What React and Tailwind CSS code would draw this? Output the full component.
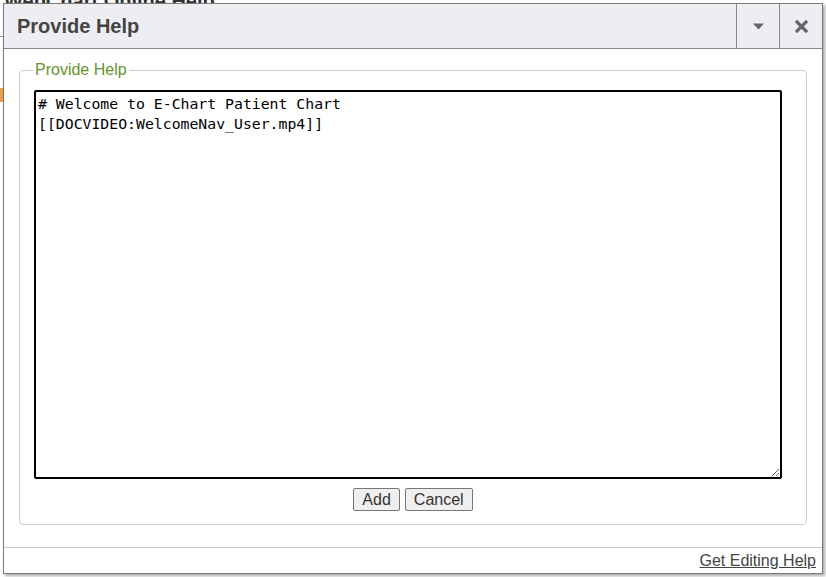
import React from "react";

const App = () => {
  return (
    <div className="relative w-[826px] h-[577px] overflow-hidden bg-white font-['Liberation_Sans',Arial,sans-serif]">
      {/* Page behind the dialog */}
      <div className="absolute left-[4px] top-[-14px] text-[20px] font-bold text-[#333]">
        WebChart Online Help
      </div>
      <div className="absolute left-0 top-[36px] w-[6px] h-px bg-[#999]" />
      <div className="absolute left-0 top-[88px] w-[3px] h-[14px] bg-[#e8a050]" />

      {/* Dialog */}
      <div className="absolute left-[3px] top-[3px] w-[820px] h-[571px] flex flex-col bg-white border border-[#7a7a7a] shadow-[2px_2px_3px_rgba(0,0,0,0.35)]">
        {/* Header */}
        <div className="flex h-[45px] shrink-0 items-stretch bg-[#eeeef2] border-b border-[#888]">
          <div className="flex-1 flex items-center pl-[13px] text-[20px] font-bold text-[#444]">
            Provide Help
          </div>
          <button className="w-[43px] flex items-center justify-center border-l border-[#888]">
            <svg width="11" height="7" viewBox="0 0 11 7">
              <path d="M0 0.5 H11 L5.5 6.5 Z" fill="#666" />
            </svg>
          </button>
          <button className="w-[43px] flex items-center justify-center border-l border-[#888]">
            <svg width="13" height="13" viewBox="0 0 13 13">
              <path d="M2 2 L11 11 M11 2 L2 11" stroke="#666" strokeWidth="3.2" strokeLinecap="square" />
            </svg>
          </button>
        </div>

        {/* Body */}
        <div className="flex-1 px-[15px] pt-[11px]">
          <fieldset className="border border-[#ccc] rounded-[4px] px-[13px] pb-[13px] pt-0 m-0">
            <legend className="px-[2px] text-[16px] text-[#62952a] leading-[20px]">Provide Help</legend>
            <textarea
              className="block ml-[1px] mt-[10px] w-[748px] h-[389px] border-2 border-black rounded-[2px] px-[2px] py-[2px] text-[14.8px] leading-[20px] text-black font-['DejaVu_Sans_Mono',Consolas,monospace] outline-none"
              defaultValue={"# Welcome to E-Chart Patient Chart\n[[DOCVIDEO:WelcomeNav_User.mp4]]"}
            />
            <div className="flex justify-center gap-[5px] mt-[9px]">
              <button className="h-[23px] px-[8px] text-[16px] text-[#333] bg-[#efefef] border border-[#767676] rounded-[2px] leading-none">
                Add
              </button>
              <button className="h-[23px] px-[8px] text-[16px] text-[#333] bg-[#efefef] border border-[#767676] rounded-[2px] leading-none">
                Cancel
              </button>
            </div>
          </fieldset>
        </div>

        {/* Footer */}
        <div className="h-[26px] shrink-0 border-t border-[#c8c8c8] flex items-center justify-end pr-[6px]">
          <a href="#" className="text-[16px] text-[#444] underline">
            Get Editing Help
          </a>
        </div>
      </div>
    </div>
  );
};

export default App;
